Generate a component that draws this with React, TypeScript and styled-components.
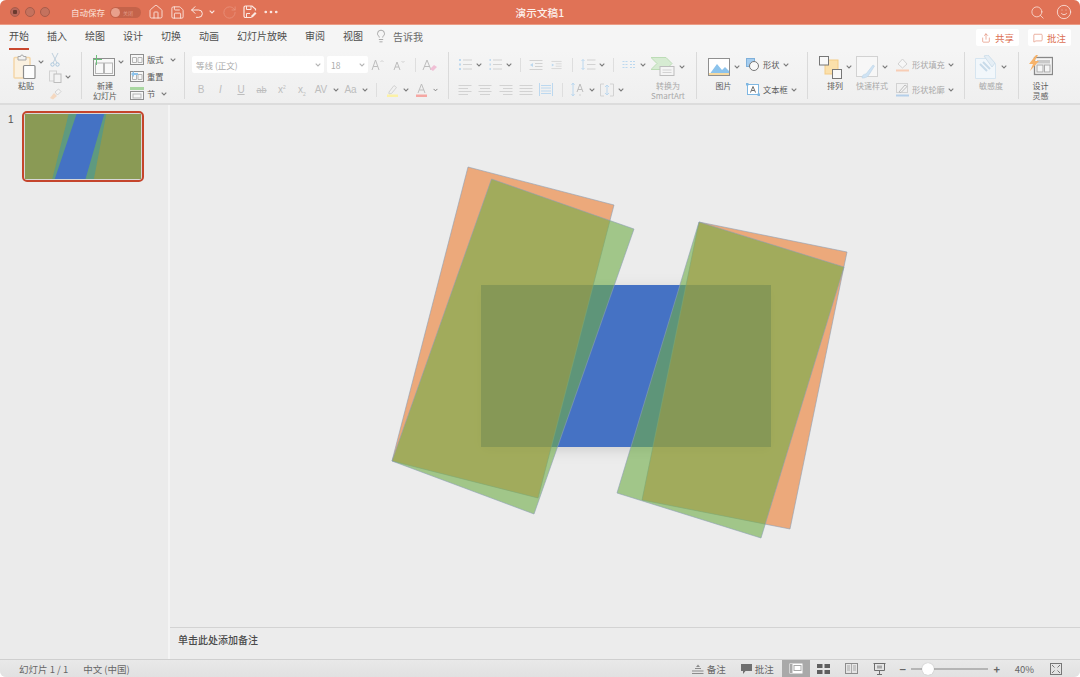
import React from "react";
import styled, { createGlobalStyle } from "styled-components";
import { Home, Save, Undo2, RotateCw, Search, Smile, MoreHorizontal, Lightbulb, Share, MessageSquare } from "lucide-react";

const GlobalStyle = createGlobalStyle`
  html, body { margin: 0; background: #fff; }
  #root { width: 1080px; height: 677px; }
`;

const FONT = `"Noto Sans CJK SC", "Noto Sans", sans-serif`;
const GREY = "#bdbdbd";
const SOFT = "#d2d2d2";
const BLUE = "#bcd8ef";
const TEXT_ON = "#5a5a5a";
const TEXT_OFF = "#a9a9a9";

const Window = styled.div`
  width: 1080px;
  height: 677px;
  border-radius: 6px;
  overflow: hidden;
  display: flex;
  flex-direction: column;
  font-family: ${FONT};
  background: #ececec;
`;

const TitleBar = styled.div`
  height: 24px;
  flex: none;
  background: #e07256;
  border-bottom: 1px solid #eb9c85;
  display: grid;
  grid-template-columns: 1fr auto 1fr;
  align-items: center;
  color: #fff;
`;

const TitleLeft = styled.div`
  display: flex;
  align-items: center;
  padding-left: 10px;
`;

const TitleRight = styled.div`
  display: flex;
  align-items: center;
  justify-content: flex-end;
  padding-right: 6px;
`;

const DocName = styled.div`
  font-size: 10.5px;
  font-weight: 500;
  letter-spacing: 0.2px;
  color: #fdf1ed;
`;

const Light = styled.span<{ $dot?: boolean }>`
  width: 10px;
  height: 10px;
  border-radius: 50%;
  margin-right: 5px;
  background: ${({ $dot }) => ($dot ? "radial-gradient(circle, #6b3a2e 0 2px, #b8675a 2.5px)" : "#c4725e")};
  border: 0.5px solid #a85c4a;
  box-sizing: border-box;
`;

const AutoSave = styled.span`
  font-size: 8.5px;
  margin-left: 16px;
  color: #fbe3dc;
`;

const Toggle = styled.div`
  width: 31px;
  height: 11px;
  margin-left: 5px;
  border-radius: 6px;
  background: #c4634a;
  display: flex;
  align-items: center;
  padding-left: 1px;
  box-sizing: border-box;
`;

const ToggleKnob = styled.span`
  width: 9px;
  height: 9px;
  border-radius: 50%;
  background: #e8a08c;
  margin-right: 3px;
`;

const ToggleLabel = styled.span`
  font-size: 5px;
  color: #e39c88;
`;

const Tool = styled.span<{ $w: number; $ml?: number }>`
  flex: none;
  width: ${({ $w }) => $w}px;
  margin-left: ${({ $ml }) => $ml ?? 0}px;
  height: 17px;
  display: inline-flex;
  align-items: center;
  justify-content: center;
  font-size: 10px;
  color: ${GREY};
`;

const TabRow = styled.div`
  height: 25px;
  flex: none;
  background: #f5f5f5;
  display: flex;
  align-items: flex-start;
  padding: 0 9px;
`;

const Tab = styled.div<{ $active?: boolean }>`
  font-size: 10px;
  line-height: 14px;
  height: 21px;
  margin-top: 4px;
  margin-right: 18px;
  color: #4d4d4d;
  box-sizing: border-box;
  border-bottom: 2px solid ${({ $active }) => ($active ? "#c9472e" : "transparent")};
`;

const TellMe = styled.div`
  display: flex;
  align-items: center;
  gap: 5px;
  height: 14px;
  margin: 4px 0 0 -7px;
  font-size: 10px;
  color: #6a6a6a;
`;

const ActionButton = styled.div<{ $ml?: string }>`
  height: 17px;
  margin-top: 4px;
  margin-left: ${({ $ml }) => $ml ?? "9px"};
  width: 43px;
  background: #fff;
  border-radius: 2px;
  display: flex;
  align-items: center;
  justify-content: center;
  gap: 4px;
  font-size: 9.5px;
  color: #dc7054;
`;

const Ribbon = styled.div`
  height: 55px;
  flex: none;
  padding-top: 3px;
  box-sizing: border-box;
  background: linear-gradient(#f5f5f5, #efefef);
  border-bottom: 2px solid #dcdcdc;
  display: flex;
  align-items: flex-start;
`;

const Group = styled.div<{ $w: number; $pl?: number }>`
  flex: none;
  width: ${({ $w }) => $w}px;
  padding-left: ${({ $pl }) => $pl ?? 0}px;
  box-sizing: border-box;
  display: flex;
  align-items: flex-start;
`;

const Divider = styled.div`
  flex: none;
  width: 1px;
  height: 47px;
  margin-top: -1px;
  background: #dadada;
`;

const InlineDivider = styled.span`
  flex: none;
  width: 1px;
  height: 14px;
  background: #dedede;
`;

const Big = styled.div<{ $w: number; $ml?: number }>`
  flex: none;
  width: ${({ $w }) => $w}px;
  margin-left: ${({ $ml }) => $ml ?? 0}px;
  display: flex;
  flex-direction: column;
  align-items: center;
`;

const BigIcon = styled.div`
  height: 28px;
  display: flex;
  align-items: center;
  justify-content: center;
  gap: 4px;
`;

const BigLabel = styled.div<{ $off?: boolean }>`
  font-size: 8px;
  line-height: 10px;
  text-align: center;
  white-space: nowrap;
  color: ${({ $off }) => ($off ? TEXT_OFF : TEXT_ON)};
`;

const Stack = styled.div<{ $gap?: number; $top?: number; $ml?: number }>`
  flex: none;
  display: flex;
  flex-direction: column;
  gap: ${({ $gap }) => $gap ?? 0}px;
  margin-top: ${({ $top }) => $top ?? 0}px;
  margin-left: ${({ $ml }) => $ml ?? 0}px;
`;

const Row = styled.div<{ $pl?: number }>`
  display: flex;
  align-items: center;
  height: 17px;
  padding-left: ${({ $pl }) => $pl ?? 0}px;
`;

const ItemLabel = styled.span<{ $off?: boolean; $w: number }>`
  flex: none;
  width: ${({ $w }) => $w}px;
  margin-left: 3px;
  padding-bottom: 1px;
  font-size: 8.2px;
  white-space: nowrap;
  color: ${({ $off }) => ($off ? TEXT_OFF : TEXT_ON)};
`;

const Select = styled.div<{ $w: number; $mr?: number }>`
  flex: none;
  width: ${({ $w }) => $w}px;
  height: 17px;
  margin-right: ${({ $mr }) => $mr ?? 0}px;
  background: #fff;
  border-radius: 2px;
  padding: 0 3px 0 4px;
  box-sizing: border-box;
  display: flex;
  align-items: center;
  justify-content: space-between;
  font-size: 8.5px;
  color: ${TEXT_OFF};
`;

const FontGlyph = styled.span<{ $italic?: boolean; $under?: boolean; $strike?: boolean; $size?: number }>`
  font-family: "Liberation Sans", sans-serif;
  font-size: ${({ $size }) => $size ?? 10}px;
  font-style: ${({ $italic }) => ($italic ? "italic" : "normal")};
  text-decoration: ${({ $under, $strike }) => ($under ? "underline" : $strike ? "line-through" : "none")};
  color: ${GREY};
`;

const Tiny = styled.sup`
  font-size: 5px;
  line-height: 0;
`;

const TinySub = styled.sub`
  font-size: 5px;
  line-height: 0;
`;

const Workspace = styled.div`
  flex: 1;
  min-height: 0;
  display: flex;
`;

const Sidebar = styled.div`
  width: 170px;
  flex: none;
  box-sizing: border-box;
  padding: 6px 0 0 8px;
  background: #ebebeb;
  border-right: 2px solid #f4f4f4;
  display: flex;
  align-items: flex-start;
  gap: 11px;
`;

const SlideNumber = styled.span`
  font-family: "Liberation Sans", sans-serif;
  font-size: 10px;
  line-height: 18px;
  color: #555;
  width: 3px;
`;

const Thumb = styled.div`
  width: 122px;
  height: 71px;
  box-sizing: border-box;
  border: 2px solid #c5452c;
  border-radius: 5px;
  padding: 1px;
  background: #d7d7d7;
  display: flex;
`;

const Main = styled.div`
  flex: 1;
  min-width: 0;
  display: flex;
  flex-direction: column;
`;

const Canvas = styled.svg`
  display: block;
  flex: 1;
  min-height: 0;
  width: 100%;
`;

const Notes = styled.div`
  height: 32px;
  flex: none;
  box-sizing: border-box;
  border-top: 1px solid #d3d3d3;
  padding: 5px 0 0 8px;
  font-size: 10px;
  font-weight: 500;
  line-height: 14px;
  color: #4a4a4a;
`;

const StatusBar = styled.div`
  height: 18px;
  flex: none;
  box-sizing: border-box;
  border-top: 1px solid #cfcfcf;
  background: linear-gradient(#e9e9e9, #e1e1e1);
  display: flex;
  align-items: center;
  font-size: 9.5px;
  color: #666;
`;

const StatusText = styled.span<{ $ml: number }>`
  margin-left: ${({ $ml }) => $ml}px;
  white-space: nowrap;
`;

const StatusIcon = styled.span<{ $ml: number }>`
  margin-left: ${({ $ml }) => $ml}px;
  display: flex;
`;

const StatusRight = styled.div`
  margin-left: auto;
  display: flex;
  align-items: center;
  height: 100%;
`;

const ViewButton = styled.span<{ $active?: boolean; $ml?: number }>`
  width: 28px;
  height: 100%;
  flex: none;
  margin-left: ${({ $ml }) => $ml ?? 0}px;
  display: flex;
  align-items: center;
  justify-content: center;
  background: ${({ $active }) => ($active ? "#a9a9a9" : "transparent")};
`;

const ZoomSign = styled.span<{ $ml: number }>`
  width: 8px;
  flex: none;
  margin-left: ${({ $ml }) => $ml}px;
  text-align: center;
  font-size: 11px;
  font-weight: 700;
  line-height: 14px;
  color: #666;
`;

const ZoomTrack = styled.div`
  width: 77px;
  height: 2px;
  flex: none;
  margin: 0 5px 0 4px;
  background: #b5b5b5;
  display: flex;
  align-items: center;
  padding-left: 11px;
  box-sizing: border-box;
`;

const ZoomKnob = styled.span`
  width: 12px;
  height: 12px;
  border-radius: 50%;
  background: #fff;
  box-shadow: 0 0 1px rgba(0, 0, 0, 0.3);
`;

const Chev = ({ c = "#7c7c7c" }: { c?: string }) => (
  <svg width="6" height="4" viewBox="0 0 6 4">
    <path d="M.7.7 3 3l2.3-2.3" fill="none" stroke={c} strokeWidth="1.1" />
  </svg>
);

const Ic = ({ w = 14, h = 14, children }: { w?: number; h?: number; children: React.ReactNode }) => (
  <svg width={w} height={h} viewBox={`0 0 ${w} ${h}`} fill="none" strokeWidth="1">
    {children}
  </svg>
);

const Lines = ({ kind }: { kind: "l" | "c" | "r" | "j" }) => {
  const rows = [1.5, 4.5, 7.5, 10.5];
  return (
    <Ic w={14} h={12}>
      {rows.map((y, i) => {
        const short = i % 2 === 1 && kind !== "j";
        const x1 = short && kind === "r" ? 4 : short && kind === "c" ? 2 : 0.5;
        const x2 = short && kind === "l" ? 10 : short && kind === "c" ? 12 : 13.5;
        return <path key={y} d={`M${x1} ${y}H${x2}`} stroke={SOFT} />;
      })}
    </Ic>
  );
};

const Bullets = ({ num }: { num?: boolean }) => (
  <Ic w={15} h={13}>
    {[2, 6.5, 11].map((y) => (
      <g key={y}>
        <rect x={num ? 1.5 : 1} y={y - 1} width={num ? 1.4 : 2} height="2" fill={BLUE} />
        <path d={`M5 ${y}H14`} stroke={SOFT} />
      </g>
    ))}
  </Ic>
);

const Indent = ({ flip }: { flip?: boolean }) => (
  <Ic w={14} h={12}>
    <path d="M.5 1.500H13.500M6 4.500H13.500M6 7.500H13.500M.5 10.500H13.500" stroke={SOFT} />
    <path d={flip ? "M1 4l3 2-3 2z" : "M4 4 1 6l3 2z"} fill={BLUE} />
  </Ic>
);

const PasteIcon = () => (
  <Ic w={26} h={26}>
    <rect x="1" y="3.500" width="16" height="20.500" rx="1" stroke="#f4d6a8" strokeWidth="1.500" fill="#fbf1e0" />
    <path d="M5 4V2.500h2.500a1.500 1.500 0 0 1 3 0H13V6H5z" stroke="#a9a9a9" fill="#f2f2f2" />
    <rect x="10.500" y="11.500" width="11.500" height="13" rx="1" stroke="#8c8c8c" strokeWidth="1.200" fill="#fdfdfd" />
  </Ic>
);

const NewSlideIcon = () => (
  <Ic w={24} h={24}>
    <rect x=".5" y="3.500" width="21" height="17" stroke="#8f8f8f" fill="#f8f8f8" />
    <rect x="2.500" y="8" width="8" height="10.500" stroke="#b5b5b5" />
    <rect x="11.500" y="8" width="8" height="10.500" stroke="#b5b5b5" />
    <path d="M3.500 0V10M0 4.500H9" stroke="#6cc07b" />
  </Ic>
);

const LayoutIcon = ({ mode }: { mode: "layout" | "reset" | "section" }) => (
  <Ic w={14} h={13}>
    {mode === "section" ? (
      <>
        <rect x="0" y="0" width="14" height="3" fill="#a8d6a0" />
        <rect x=".5" y="4.500" width="13" height="8" stroke="#8f8f8f" fill="#f7f7f7" />
        <rect x="3" y="7" width="8" height="4" stroke="#b5b5b5" />
      </>
    ) : (
      <>
        <rect x=".5" y="1.500" width="13" height="10" stroke="#8f8f8f" fill="#f7f7f7" />
        <path d="M2.500 4.500h4v5h-4zM8 4.500h4v5H8z" stroke="#b5b5b5" />
        {mode === "reset" && <path d="M1 4 4 1v2h4v2H4v2z" fill="#8dc3ec" />}
      </>
    )}
  </Ic>
);

const ScissorsIcon = () => (
  <Ic w={10} h={14}>
    <path d="M2 0l5 10M8 0 3 10" stroke="#bfcfdc" />
    <circle cx="2.500" cy="11.500" r="1.700" stroke="#a9c6dc" />
    <circle cx="7.500" cy="11.500" r="1.700" stroke="#a9c6dc" />
  </Ic>
);

const CopyIcon = () => (
  <Ic w={13} h={13}>
    <rect x=".5" y="1" width="7" height="10" stroke={SOFT} />
    <rect x="5" y="4" width="7" height="8.500" stroke={GREY} fill="#f3f3f3" />
  </Ic>
);

const BrushIcon = () => (
  <Ic w={13} h={12}>
    <path d="M1 10 5 5l3 3-4 3.500z" fill="#f4d8c0" />
    <path d="M6 4 9.500 1l2.500 2.500L8.500 7z" stroke={SOFT} fill="#f4f4f4" />
  </Ic>
);

const SizeGlyph = ({ up }: { up?: boolean }) => (
  <Ic w={14} h={13}>
    <path d={up ? "M1 12 4.500 2 8 12M2.300 8.500h4.400" : "M2 12 5 4l3 8M3 9h4"} stroke={GREY} />
    <path d={up ? "M9.500 4 11 2.500 12.500 4" : "M9.500 3 11 4.500 12.500 3"} stroke={SOFT} />
  </Ic>
);

const EraseGlyph = () => (
  <Ic w={16} h={14}>
    <path d="M1 12 5 2l4 10M2.300 8.500h5.400" stroke={GREY} />
    <path d="M8 11l4-4 3 2-4 4z" fill="#f0bfd5" />
  </Ic>
);

const PenColor = ({ kind }: { kind: "mark" | "font" }) => (
  <Ic w={13} h={14}>
    {kind === "mark" ? (
      <path d="M3 9 8 2.500l2.500 2L5.500 10.500 3 11z" stroke={SOFT} />
    ) : (
      <path d="M3 10 6.500 1 10 10M4.300 7h4.400" stroke={GREY} />
    )}
    <rect x="1" y="11.500" width="11" height="2.500" fill={kind === "mark" ? "#fbf1a8" : "#f5a7a3"} />
  </Ic>
);

const DistGlyph = () => (
  <Ic w={14} h={13}>
    <path d="M.5 0V13M13.500 0V13" stroke={BLUE} />
    <path d="M2 2.500H12M2 5H12M2 8H12M2 10.500H12" stroke={BLUE} />
  </Ic>
);

const TextDir = () => (
  <Ic w={14} h={15}>
    <path d="M2 1V14M.5 3 2 1l1.500 2M.5 12 2 14l1.500-2" stroke={BLUE} />
    <path d="M6 10 9 2l3 8M7 7.500h4" stroke={GREY} />
    <path d="M9 12v2" stroke={SOFT} />
  </Ic>
);

const TextAlign = () => (
  <Ic w={14} h={14}>
    <path d="M4 1H.5v12H4M10 1h3.500v12H10" stroke={SOFT} />
    <path d="M7 2v10M5 4l2-2 2 2M5 10l2 2 2-2" stroke={BLUE} />
  </Ic>
);

const Columns = () => (
  <Ic w={14} h={9}>
    <path d="M.5 1.500H6M8 1.500H13.500M.5 4.500H6M8 4.500H13.500M.5 7.500H6M8 7.500H13.500" stroke={BLUE} strokeDasharray="2 1" />
  </Ic>
);

const Spacing = () => (
  <Ic w={15} h={13}>
    <path d="M2 1.500V11.500M.5 3 2 1.500 3.500 3M.5 10 2 11.500 3.500 10" stroke={BLUE} />
    <path d="M6 2H14.500M6 6.500H14.500M6 11H14.500" stroke={SOFT} />
  </Ic>
);

const SmartArtIcon = () => (
  <Ic w={24} h={20}>
    <path d="M0 .5h15l6 6-6 6H0l6-6z" fill="#d6ebd2" stroke="#bcdcb6" />
    <rect x="9" y="9.500" width="14" height="9" fill="#f4f4f4" stroke={GREY} />
    <path d="M11.500 13h9M11.500 15.500h9" stroke={SOFT} />
  </Ic>
);

const PictureIcon = () => (
  <Ic w={22} h={18}>
    <rect x=".5" y=".5" width="21" height="17" fill="#fff" stroke="#8f8f8f" />
    <path d="M1 17 9 6l5 6 3-3 4 4v4z" fill="#8cc3ec" />
    <path d="M1 17h20v-2H1z" fill="#f6d9a0" />
  </Ic>
);

const ShapeIcon = () => (
  <Ic w={14} h={13}>
    <rect x=".5" y=".5" width="8" height="8" fill="#a5cdef" stroke="#7fb0da" />
    <circle cx="8" cy="8" r="4.500" fill="#f8f8f8" stroke="#777" />
  </Ic>
);

const TextBoxIcon = () => (
  <Ic w={14} h={13}>
    <rect x="1.500" y="1.500" width="11" height="10" fill="#fff" stroke="#7fb7e2" />
    <rect x="0" y="0" width="2.500" height="2.500" fill="#7fb7e2" />
    <rect x="11.500" y="10.500" width="2.500" height="2.500" fill="#7fb7e2" />
    <path d="M4.500 9.500 7 3.500l2.500 6M5.500 7.500h3" stroke="#6c6c6c" />
  </Ic>
);

const ArrangeIcon = () => (
  <Ic w={23} h={23}>
    <rect x="6" y="4" width="13" height="14" fill="#fbe0ab" stroke="#f4cb85" />
    <rect x=".5" y=".5" width="9" height="8.500" fill="#f8f8f8" stroke="#777" />
    <rect x="13.500" y="13.500" width="9" height="9" fill="#f8f8f8" stroke="#777" />
  </Ic>
);

const QuickStyleIcon = () => (
  <Ic w={22} h={23}>
    <rect x=".5" y=".5" width="21" height="20" stroke={SOFT} fill="#f7f7f7" />
    <path d="M6 22c0-3 2-4 4-4l7-9 1.500 1-6 9.500c-1.500 2-4 2.500-6.500 2.500z" fill="#cfe3f4" stroke="#bcd3e6" strokeWidth=".6" />
  </Ic>
);

const FillIcon = () => (
  <Ic w={13} h={14}>
    <path d="M6.500 1 11 6l-4.500 4L2 6z" stroke={SOFT} fill="#f7f7f7" />
    <rect x="0" y="11.500" width="13" height="2" fill="#f8cdb5" />
  </Ic>
);

const OutlineIcon = () => (
  <Ic w={13} h={14}>
    <rect x=".5" y=".5" width="11" height="9" stroke={SOFT} />
    <path d="M3 9 9 2l2 1.500-6 6z" stroke={GREY} fill="#f5f5f5" />
    <rect x="0" y="11.500" width="13" height="2" fill="#b5cfe9" />
  </Ic>
);

const SensitivityIcon = () => (
  <Ic w={22} h={24}>
    <path d="M.5 3.500h15l5 5V23.500H.5z" fill="#f2f7fb" stroke="#d6e5f0" />
    <path d="M9 1l4-1 7 8-3 4z" fill="#e5eef5" stroke="#cfdfeb" />
    <path d="M5 9l7 7M8 7l7 7" stroke="#c8dbe9" strokeWidth="2" />
  </Ic>
);

const DesignIcon = () => (
  <Ic w={24} h={24}>
    <rect x="5.500" y="2.500" width="18" height="17" stroke="#888" strokeWidth="1.300" fill="#f6f6f6" />
    <rect x="8" y="5" width="13" height="3.500" fill="#c9c9c9" />
    <rect x="8" y="10" width="6" height="7" stroke="#aaa" />
    <rect x="15.500" y="10" width="5.500" height="7" stroke="#aaa" />
    <path d="M7 0 0 9h4l-3 7 9-10H5.500L9 0z" fill="#f7b36b" />
  </Ic>
);

const SaveEditIcon = () => (
  <Ic w={14} h={14}>
    <path d="M8 12.500H2.500a1.500 1.500 0 0 1-1.500-1.500V2.500A1.500 1.500 0 0 1 2.500 1H9l3.500 3v1.500" stroke="#fbe9e3" strokeWidth="1.200" />
    <path d="M3.500 1v3.500h4.500V1M3.500 12V8.500H7" stroke="#fbe9e3" />
    <path d="M8 13l.5-2.500L12 7l1.500 1.500L10 12z" fill="#fbe9e3" />
  </Ic>
);

const NotesGlyph = () => (
  <Ic w={12} h={10}>
    <path d="M0 9.500H11.500M0 7H11.500M3 4.500H9" stroke="#8b8b8b" />
    <path d="M4 3l2-2.500L8 3z" fill="#8b8b8b" />
  </Ic>
);

const CommentGlyph = () => (
  <Ic w={11} h={10}>
    <path d="M0 0H11V7H4.500L2 10V7H0z" fill="#707070" />
  </Ic>
);

const NormalView = () => (
  <Ic w={14} h={11}>
    <rect x=".5" y=".5" width="13" height="10" fill="#fff" />
    <rect x="1" y="1" width="2.500" height="9" fill="#a9a9a9" />
    <rect x="5" y="2.500" width="7" height="5" stroke="#a9a9a9" />
  </Ic>
);

const GridView = () => (
  <Ic w={13} h={10}>
    <rect width="5.500" height="4" fill="#5f5f5f" />
    <rect x="7.500" width="5.500" height="4" fill="#5f5f5f" />
    <rect y="6" width="5.500" height="4" fill="#5f5f5f" />
    <rect x="7.500" y="6" width="5.500" height="4" fill="#5f5f5f" />
  </Ic>
);

const BookView = () => (
  <Ic w={13} h={11}>
    <rect x=".5" y=".5" width="12" height="10" stroke="#8c8c8c" />
    <path d="M6.500 1v9M2 3h3M2 5h3M2 7h3M8 3h3M8 5h3M8 7h3" stroke="#aaa" />
  </Ic>
);

const PresentView = () => (
  <Ic w={13} h={12}>
    <path d="M.5.500h12M1.500.500v7h10v-7M6.500 7.500V11.500M4 11.500h5" stroke="#6e6e6e" />
    <rect x="4" y="2.500" width="5" height="3" fill="#a9a9a9" />
  </Ic>
);

const FitView = () => (
  <Ic w={12} h={12}>
    <rect x=".5" y=".5" width="11" height="11" stroke="#777" />
    <path d="M2 2l2.500 2.500M10 2 7.500 4.500M2 10l2.500-2.500M10 10 7.500 7.500" stroke="#777" />
  </Ic>
);

const SlideShapes = () => (
  <g strokeWidth="0.7" stroke="#8d9fb5" strokeOpacity="0.85">
    <rect x="481" y="285" width="290" height="162" fill="#4472c4" stroke="none" filter="url(#slideShadow)" />
    <polygon points="468,167 614,205 538,498 392,461" fill="#ed7d31" fillOpacity="0.6" />
    <polygon points="491.500,179 634,229 534,514 392,461" fill="#70ad47" fillOpacity="0.6" />
    <polygon points="699,222 847,252 790,529 642,500" fill="#ed7d31" fillOpacity="0.6" />
    <polygon points="699,222 844,267 761,538 617,493" fill="#70ad47" fillOpacity="0.6" />
  </g>
);

export default function App() {
  return (
    <Window>
      <GlobalStyle />
      <TitleBar>
        <TitleLeft>
          <Light $dot />
          <Light />
          <Light />
          <AutoSave>自动保存</AutoSave>
          <Toggle>
            <ToggleKnob />
            <ToggleLabel>关闭</ToggleLabel>
          </Toggle>
          <Tool $w={20} $ml={5}><Home size={16} color="#fbe9e3" strokeWidth={1.3} /></Tool>
          <Tool $w={22}><Save size={15} color="#fbe9e3" strokeWidth={1.4} /></Tool>
          <Tool $w={18}><Undo2 size={16} color="#fbe9e3" strokeWidth={1.5} /></Tool>
          <Tool $w={12}><Chev c="#fbe9e3" /></Tool>
          <Tool $w={22}><RotateCw size={15} color="#ea9680" strokeWidth={1.2} /></Tool>
          <Tool $w={20}><SaveEditIcon /></Tool>
          <Tool $w={22}><MoreHorizontal size={18} color="#fbe9e3" strokeWidth={1.6} /></Tool>
        </TitleLeft>
        <DocName>演示文稿1</DocName>
        <TitleRight>
          <Tool $w={20}><Search size={15} color="#fbe9e3" strokeWidth={1.2} /></Tool>
          <Tool $w={20} $ml={7}><Smile size={16} color="#fbe9e3" strokeWidth={1.2} /></Tool>
        </TitleRight>
      </TitleBar>

      <TabRow>
        <Tab $active>开始</Tab>
        <Tab>插入</Tab>
        <Tab>绘图</Tab>
        <Tab>设计</Tab>
        <Tab>切换</Tab>
        <Tab>动画</Tab>
        <Tab>幻灯片放映</Tab>
        <Tab>审阅</Tab>
        <Tab>视图</Tab>
        <TellMe>
          <Lightbulb size={14} color="#8a8a8a" strokeWidth={1.2} />
          告诉我
        </TellMe>
        <ActionButton $ml="auto">
          <Share size={10} color="#dc7054" strokeWidth={1.3} />
          共享
        </ActionButton>
        <ActionButton>
          <MessageSquare size={10} color="#dc7054" strokeWidth={1.3} />
          批注
        </ActionButton>
      </TabRow>

      <Ribbon>
        <Group $w={81} $pl={14}>
          <Big $w={24}>
            <BigIcon><PasteIcon /></BigIcon>
            <BigLabel>粘贴</BigLabel>
          </Big>
          <Tool $w={6}><Chev /></Tool>
          <Stack $top={-2} $ml={4}>
            <Row><Tool $w={14}><ScissorsIcon /></Tool></Row>
            <Row>
              <Tool $w={14}><CopyIcon /></Tool>
              <Tool $w={12}><Chev /></Tool>
            </Row>
            <Row><Tool $w={14}><BrushIcon /></Tool></Row>
          </Stack>
        </Group>
        <Divider />
        <Group $w={102} $pl={11}>
          <Big $w={24}>
            <BigIcon><NewSlideIcon /></BigIcon>
            <BigLabel>新建<br />幻灯片</BigLabel>
          </Big>
          <Tool $w={8}><Chev /></Tool>
          <Stack $top={-2} $ml={4}>
            <Row>
              <Tool $w={15}><LayoutIcon mode="layout" /></Tool>
              <ItemLabel $w={23}>版式</ItemLabel>
              <Chev />
            </Row>
            <Row>
              <Tool $w={15}><LayoutIcon mode="reset" /></Tool>
              <ItemLabel $w={23}>重置</ItemLabel>
            </Row>
            <Row>
              <Tool $w={15}><LayoutIcon mode="section" /></Tool>
              <ItemLabel $w={14}>节</ItemLabel>
              <Chev />
            </Row>
          </Stack>
        </Group>
        <Divider />
        <Group $w={263} $pl={7}>
          <Stack $top={3} $gap={8}>
            <Row>
              <Select $w={132} $mr={3}>等线 (正文)<Chev c="#b5b5b5" /></Select>
              <Select $w={41}>18<Chev c="#b5b5b5" /></Select>
              <Tool $w={20}><SizeGlyph up /></Tool>
              <Tool $w={21}><SizeGlyph /></Tool>
              <Tool $w={6} />
              <InlineDivider />
              <Tool $w={28}><EraseGlyph /></Tool>
            </Row>
            <Row>
              <Tool $w={18}><FontGlyph>B</FontGlyph></Tool>
              <Tool $w={21}><FontGlyph $italic>I</FontGlyph></Tool>
              <Tool $w={20}><FontGlyph $under>U</FontGlyph></Tool>
              <Tool $w={21}><FontGlyph $strike $size={9}>ab</FontGlyph></Tool>
              <Tool $w={20}><FontGlyph>x<Tiny>2</Tiny></FontGlyph></Tool>
              <Tool $w={20}><FontGlyph>x<TinySub>2</TinySub></FontGlyph></Tool>
              <Tool $w={18}><FontGlyph>AV</FontGlyph></Tool>
              <Tool $w={11}><Chev /></Tool>
              <Tool $w={19}><FontGlyph>Aa</FontGlyph></Tool>
              <Tool $w={10}><Chev /></Tool>
              <Tool $w={6} />
              <InlineDivider />
              <Tool $w={20} $ml={5}><PenColor kind="mark" /></Tool>
              <Tool $w={8}><Chev /></Tool>
              <Tool $w={23}><PenColor kind="font" /></Tool>
              <Tool $w={5}><Chev /></Tool>
            </Row>
          </Stack>
        </Group>
        <Divider />
        <Group $w={247}>
          <Stack $top={3} $gap={8}>
            <Row $pl={8}>
              <Tool $w={16}><Bullets /></Tool>
              <Tool $w={12}><Chev /></Tool>
              <Tool $w={20}><Bullets num /></Tool>
              <Tool $w={8}><Chev /></Tool>
              <Tool $w={7} />
              <InlineDivider />
              <Tool $w={30}><Indent /></Tool>
              <Tool $w={11}><Indent flip /></Tool>
              <Tool $w={10} />
              <InlineDivider />
              <Tool $w={16} $ml={7}><Spacing /></Tool>
              <Tool $w={11}><Chev /></Tool>
              <Tool $w={6} />
              <InlineDivider />
              <Tool $w={15} $ml={7}><Columns /></Tool>
              <Tool $w={13}><Chev /></Tool>
            </Row>
            <Row $pl={6}>
              <Tool $w={20}><Lines kind="l" /></Tool>
              <Tool $w={20}><Lines kind="c" /></Tool>
              <Tool $w={21}><Lines kind="r" /></Tool>
              <Tool $w={20}><Lines kind="j" /></Tool>
              <Tool $w={20}><DistGlyph /></Tool>
              <Tool $w={6} />
              <InlineDivider />
              <Tool $w={16} $ml={7}><TextDir /></Tool>
              <Tool $w={11}><Chev /></Tool>
              <Tool $w={20}><TextAlign /></Tool>
              <Tool $w={8}><Chev /></Tool>
            </Row>
          </Stack>
          <Big $w={38}>
            <BigIcon><SmartArtIcon /><Chev /></BigIcon>
            <BigLabel $off>转换为<br />SmartArt</BigLabel>
          </Big>
        </Group>
        <Divider />
        <Group $w={110} $pl={10}>
          <Big $w={33}>
            <BigIcon><PictureIcon /><Chev /></BigIcon>
            <BigLabel>图片</BigLabel>
          </Big>
          <Stack $top={3} $gap={8} $ml={6}>
            <Row>
              <Tool $w={14}><ShapeIcon /></Tool>
              <ItemLabel $w={20}>形状</ItemLabel>
              <Chev />
            </Row>
            <Row>
              <Tool $w={14}><TextBoxIcon /></Tool>
              <ItemLabel $w={28}>文本框</ItemLabel>
              <Chev />
            </Row>
          </Stack>
        </Group>
        <Divider />
        <Group $w={156} $pl={10}>
          <Big $w={34}>
            <BigIcon><ArrangeIcon /><Chev /></BigIcon>
            <BigLabel>排列</BigLabel>
          </Big>
          <Big $w={34} $ml={3}>
            <BigIcon><QuickStyleIcon /><Chev /></BigIcon>
            <BigLabel $off>快速样式</BigLabel>
          </Big>
          <Stack $top={3} $gap={8} $ml={7}>
            <Row>
              <Tool $w={13}><FillIcon /></Tool>
              <ItemLabel $off $w={36}>形状填充</ItemLabel>
              <Chev />
            </Row>
            <Row>
              <Tool $w={13}><OutlineIcon /></Tool>
              <ItemLabel $off $w={36}>形状轮廓</ItemLabel>
              <Chev />
            </Row>
          </Stack>
        </Group>
        <Divider />
        <Group $w={53} $pl={13}>
          <Big $w={26}>
            <BigIcon><SensitivityIcon /><Chev /></BigIcon>
            <BigLabel $off>敏感度</BigLabel>
          </Big>
        </Group>
        <Divider />
        <Group $w={61} $pl={10}>
          <Big $w={23}>
            <BigIcon><DesignIcon /></BigIcon>
            <BigLabel>设计<br />灵感</BigLabel>
          </Big>
        </Group>
      </Ribbon>

      <Workspace>
        <Sidebar>
          <SlideNumber>1</SlideNumber>
          <Thumb>
            <svg width="116" height="65" viewBox="25 114 117 65" preserveAspectRatio="none">
              <rect x="25" y="114" width="117" height="65" fill="#8a9a55" />
              <polygon points="69,114 107,114 94.500,179 52.500,179" fill="#5f9a7f" />
              <polygon points="77,114 105,114 86,179 55,179" fill="#4472c4" />
            </svg>
          </Thumb>
        </Sidebar>
        <Main>
          <Canvas viewBox="170 105 910 522" preserveAspectRatio="xMinYMin slice">
            <defs>
              <filter id="slideShadow" x="-20%" y="-20%" width="140%" height="150%">
                <feDropShadow dx="0" dy="3" stdDeviation="7" floodColor="#000" floodOpacity="0.13" />
              </filter>
            </defs>
            <SlideShapes />
          </Canvas>
          <Notes>单击此处添加备注</Notes>
        </Main>
      </Workspace>

      <StatusBar>
        <StatusText $ml={19}>幻灯片 1 / 1</StatusText>
        <StatusText $ml={15}>中文 (中国)</StatusText>
        <StatusRight>
          <NotesGlyph />
          <StatusText $ml={3}>备注</StatusText>
          <StatusIcon $ml={15}><CommentGlyph /></StatusIcon>
          <StatusText $ml={3}>批注</StatusText>
          <ViewButton $active $ml={8}><NormalView /></ViewButton>
          <ViewButton><GridView /></ViewButton>
          <ViewButton><BookView /></ViewButton>
          <ViewButton><PresentView /></ViewButton>
          <ZoomSign $ml={5}>−</ZoomSign>
          <ZoomTrack><ZoomKnob /></ZoomTrack>
          <ZoomSign $ml={0}>+</ZoomSign>
          <StatusText $ml={14}>40%</StatusText>
          <Tool $w={12} $ml={16}><FitView /></Tool>
          <Tool $w={18} />
        </StatusRight>
      </StatusBar>
    </Window>
  );
}
